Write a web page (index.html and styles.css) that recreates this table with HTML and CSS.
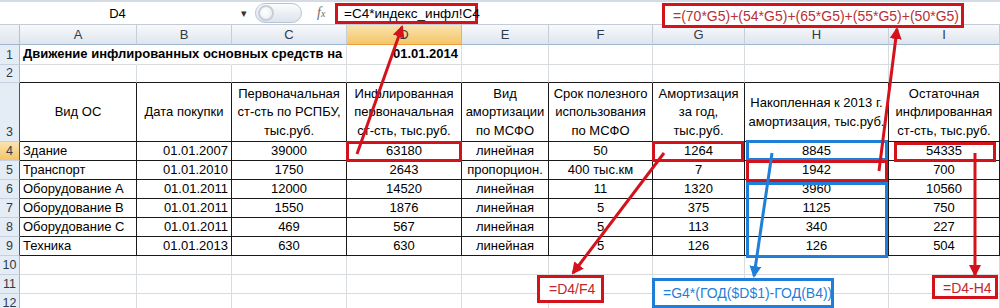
FILE: index.html
```html
<!DOCTYPE html>
<html lang="ru">
<head>
<meta charset="utf-8">
<title>Движение инфлированных основных средств</title>
<link rel="stylesheet" href="styles.css">
</head>
<body>
<div class="page">
  <div class="fbar">
    <div class="namebox"><span class="name">D4</span><span class="dd">▾</span></div>
    <div class="pill"><span class="knob"></span></div>
    <div class="fx">f<span class="fxs">x</span></div>
    <div class="fwrap"><span class="formula">=C4*индекс_инфл!C4</span></div>
  </div>

  <div class="sheet">
    <div class="corner"></div>
    <div class="ch">A</div><div class="ch">B</div><div class="ch">C</div><div class="ch sel">D</div><div class="ch">E</div><div class="ch">F</div><div class="ch">G</div><div class="ch">H</div><div class="ch">I</div>

    <div class="rh">1</div>
    <div class="c l b nob title">Движение инфлированных основных средств на</div><div class="c nob"></div><div class="c"></div><div class="c r b">01.01.2014</div><div class="c"></div><div class="c"></div><div class="c"></div><div class="c"></div><div class="c"></div>

    <div class="rh">2</div>
    <div class="c top"></div><div class="c top"></div><div class="c top"></div><div class="c top"></div><div class="c top"></div><div class="c top"></div><div class="c top"></div><div class="c top"></div><div class="c top"></div>

    <div class="rh tr">3</div>
    <div class="t hd">Вид ОС</div>
    <div class="t hd">Дата покупки</div>
    <div class="t hd">Первоначальная<br>ст-сть по РСПБУ,<br>тыс.руб.</div>
    <div class="t hd">Инфлированная<br>первоначальная<br>ст-сть, тыс.руб.</div>
    <div class="t hd">Вид<br>амортизации<br>по МСФО</div>
    <div class="t hd">Срок полезного<br>использования<br>по МСФО</div>
    <div class="t hd">Амортизация<br>за год,<br>тыс.руб.</div>
    <div class="t hd">Накопленная к 2013 г.<br>амортизация, тыс.руб.</div>
    <div class="t hd">Остаточная<br>инфлированная<br>ст-сть, тыс.руб.</div>

    <div class="rh tr sel">4</div>
    <div class="t l">Здание</div><div class="t r">01.01.2007</div><div class="t">39000</div><div class="t">63180</div><div class="t">линейная</div><div class="t">50</div><div class="t">1264</div><div class="t">8845</div><div class="t">54335</div>

    <div class="rh tr">5</div>
    <div class="t l">Транспорт</div><div class="t r">01.01.2010</div><div class="t">1750</div><div class="t">2643</div><div class="t">пропорцион.</div><div class="t">400 тыс.км</div><div class="t">7</div><div class="t">1942</div><div class="t">700</div>

    <div class="rh tr">6</div>
    <div class="t l">Оборудование А</div><div class="t r">01.01.2011</div><div class="t">12000</div><div class="t">14520</div><div class="t">линейная</div><div class="t">11</div><div class="t">1320</div><div class="t">3960</div><div class="t">10560</div>

    <div class="rh tr">7</div>
    <div class="t l">Оборудование В</div><div class="t r">01.01.2011</div><div class="t">1550</div><div class="t">1876</div><div class="t">линейная</div><div class="t">5</div><div class="t">375</div><div class="t">1125</div><div class="t">750</div>

    <div class="rh tr">8</div>
    <div class="t l">Оборудование С</div><div class="t r">01.01.2011</div><div class="t">469</div><div class="t">567</div><div class="t">линейная</div><div class="t">5</div><div class="t">113</div><div class="t">340</div><div class="t">227</div>

    <div class="rh tr">9</div>
    <div class="t l">Техника</div><div class="t r">01.01.2013</div><div class="t">630</div><div class="t">630</div><div class="t">линейная</div><div class="t">5</div><div class="t">126</div><div class="t">126</div><div class="t">504</div>

    <div class="rh">10</div>
    <div class="c"></div><div class="c"></div><div class="c"></div><div class="c"></div><div class="c"></div><div class="c"></div><div class="c"></div><div class="c"></div><div class="c"></div>
    <div class="rh">11</div>
    <div class="c"></div><div class="c"></div><div class="c"></div><div class="c"></div><div class="c"></div><div class="c"></div><div class="c"></div><div class="c"></div><div class="c"></div>
    <div class="rh">12</div>
    <div class="c"></div><div class="c"></div><div class="c"></div><div class="c"></div><div class="c"></div><div class="c"></div><div class="c"></div><div class="c"></div><div class="c"></div>
  </div>

  <!-- annotations -->
  <div class="note note-top">=(70*G5)+(54*G5)+(65*G5)+(55*G5)+(50*G5)</div>
  <div class="hl red hl-d4"></div>
  <div class="hl red hl-g4"></div>
  <div class="hl blue hl-h4"></div>
  <div class="hl red hl-h5"></div>
  <div class="hl blue hl-h69"></div>
  <div class="hl red hl-i4"></div>
  <div class="note red-note note-df">=D4/F4</div>
  <div class="note blue-note note-god">=G4*(ГОД($D$1)-ГОД(B4))</div>
  <div class="note red-note note-dh">=D4-H4</div>

  <svg class="arrows" width="1000" height="308" viewBox="0 0 1000 308">
    <defs>
      <marker id="hr" markerUnits="userSpaceOnUse" markerWidth="12" markerHeight="12" refX="10" refY="6" orient="auto">
        <path d="M0,0 L12,6 L0,12 z" fill="#d4121c"/>
      </marker>
      <marker id="hb" markerUnits="userSpaceOnUse" markerWidth="12" markerHeight="12" refX="10" refY="6" orient="auto">
        <path d="M0,0 L12,6 L0,12 z" fill="#1f7fd8"/>
      </marker>
    </defs>
    <line x1="357" y1="154" x2="402" y2="27" stroke="#d4121c" stroke-width="3" marker-end="url(#hr)"/>
    <line x1="879" y1="171" x2="897" y2="29" stroke="#d4121c" stroke-width="3" marker-end="url(#hr)"/>
    <line x1="664" y1="153" x2="573" y2="273" stroke="#d4121c" stroke-width="3" marker-end="url(#hr)"/>
    <line x1="772" y1="153" x2="754" y2="276" stroke="#1f7fd8" stroke-width="3" marker-end="url(#hb)"/>
    <line x1="975" y1="153" x2="975" y2="275" stroke="#d4121c" stroke-width="3" marker-end="url(#hr)"/>
  </svg>
</div>
</body>
</html>
```

FILE: styles.css
```css
* { box-sizing: border-box; }
html, body { margin: 0; padding: 0; background: #fff; }
body {
  font-family: "Liberation Sans", Arial, sans-serif;
  font-size: 13px;
  color: #000;
  width: 1000px;
  height: 308px;
  overflow: hidden;
}
.page { position: relative; width: 1000px; height: 308px; overflow: hidden; }

/* formula bar */
.fbar {
  display: flex;
  align-items: center;
  height: 25px;
  border-top: 2px solid #d5dbe4;
  border-bottom: 1px solid #c3cbd6;
  background: #fff;
}
.namebox {
  display: flex;
  align-items: center;
  width: 252px;
  height: 100%;
}
.name { width: 235px; text-align: center; font-size: 13px; }
.dd { font-size: 11px; color: #333; width: 17px; text-align: center; }
.pill {
  display: flex;
  align-items: center;
  width: 47px;
  height: 20px;
  margin-left: 3px;
  border: 1px solid #b9c4d2;
  border-radius: 11px;
  background: linear-gradient(#fbfcfd, #dde3ec);
}
.knob {
  width: 16px; height: 16px;
  margin-left: 2px;
  border-radius: 50%;
  border: 2px solid #c7ced8;
  background: radial-gradient(circle at 40% 40%, #fff, #e6eaf0);
}
.fx {
  width: 33px;
  padding-left: 15px;
  font-family: "Liberation Serif", serif;
  font-style: italic;
  font-size: 14px;
  color: #6b6b6b;
}
.fxs { font-size: 10px; }
.fwrap { flex: 1; height: 100%; display: flex; align-items: center; }
.formula {
  display: inline-block;
  height: 21px;
  width: 143px;
  line-height: 16px;
  padding: 0 0 0 6px;
  border: 3px solid #d4121c;
  font-size: 13.5px;
  white-space: nowrap;
  overflow: visible;
}

/* sheet */
.sheet {
  display: grid;
  grid-template-columns: 20px 117px 95px 115px 115px 87px 104px 92px 144px 111px;
  grid-template-rows: 20px 20px 18px 59px repeat(9, 19px);
}
.corner {
  background: linear-gradient(#f1f4f8, #dfe5ee);
  border-right: 1px solid #b6c3d3;
  border-bottom: 1px solid #9eb6ce;
}
.ch {
  display: flex;
  align-items: center;
  justify-content: center;
  background: linear-gradient(#f8f9fb, #dee5ee);
  border-right: 1px solid #c5cfdc;
  border-bottom: 1px solid #9eb6ce;
  color: #303a48;
  font-size: 13px;
}
.ch.sel { background: linear-gradient(#fae3b0, #f3c567); border-bottom-color: #f29b36; border-right-color: #e9b25a; }
.rh {
  display: flex;
  align-items: flex-end;
  justify-content: center;
  padding-bottom: 1px;
  background: #e4ecf6;
  border-right: 1px solid #9eb6ce;
  border-bottom: 1px solid #c5d1df;
  color: #303a48;
  font-size: 12.5px;
  line-height: 16px;
}
.rh.sel { background: linear-gradient(#fae3b0, #f3c567); border-right-color: #f29b36; }
.rh.tr { border-right-color: #555; }

.c, .t {
  border-right: 1px solid #d9dcdf;
  border-bottom: 1px solid #d9dcdf;
  line-height: 18px;
  white-space: nowrap;
  text-align: center;
  overflow: visible;
}
.t { border-right-color: #1a1a1a; border-bottom-color: #1a1a1a; }
.c.top { border-bottom-color: #1a1a1a; }
.c.nob { border-right-color: transparent; }
.l { text-align: left; padding-left: 3px; }
.r { text-align: right; padding-right: 3px; }
.b { font-weight: bold; }
.title { position: relative; z-index: 1; }
.hd {
  display: flex;
  align-items: center;
  justify-content: center;
  text-align: center;
  line-height: 18.5px;
  padding-top: 1px;
}

/* annotations */
.note, .hl { position: absolute; }
.hl { border: 3px solid; background: transparent; }
.hl.red { border-color: #d4121c; }
.hl.blue { border-color: #1f7fd8; }
.hl-d4 { left: 346px; top: 141px; width: 116px; height: 21px; }
.hl-g4 { left: 652px; top: 141px; width: 92px; height: 21px; }
.hl-h4 { left: 746px; top: 140px; width: 142px; height: 21px; }
.hl-h5 { left: 746px; top: 160px; width: 142px; height: 22px; }
.hl-h69 { left: 746px; top: 182px; width: 142px; height: 76px; }
.hl-i4 { left: 894px; top: 142px; width: 102px; height: 20px; }

.note {
  background: #fff;
  border: 3px solid #d4121c;
  white-space: nowrap;
  font-size: 14px;
}
.note-top {
  left: 662px; top: 3px; width: 302px; height: 25px;
  padding: 2px 0 0 8px;
  color: #b92f35;
  line-height: 17px;
}
.red-note { color: #c2262d; line-height: 18px; }
.blue-note { color: #1f7fd8; border-color: #1f7fd8; line-height: 20px; }
.note-df { left: 537px; top: 275px; width: 67px; height: 28px; padding: 2px 0 0 9px; }
.note-god { left: 652px; top: 278px; width: 182px; height: 30px; padding: 2px 0 0 8px; }
.note-dh { left: 932px; top: 275px; width: 66px; height: 24px; padding: 1px 0 0 8px; }

.arrows { position: absolute; left: 0; top: 0; pointer-events: none; }
```
